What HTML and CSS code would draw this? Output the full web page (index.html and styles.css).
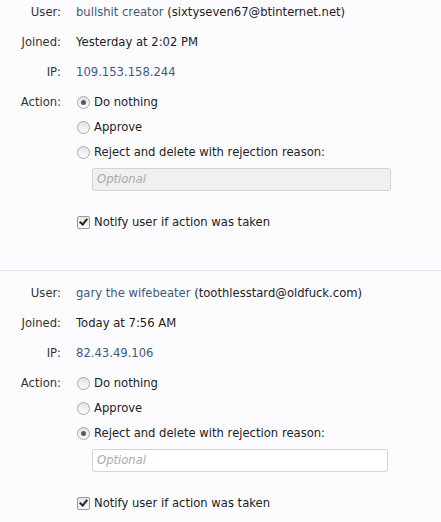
FILE: index.html
```html
<!DOCTYPE html>
<html>
<head>
<meta charset="utf-8">
<link rel="stylesheet" href="styles.css">
</head>
<body>
<div class="list">
  <div class="block first">
    <div class="row"><div class="label">User:</div><div class="value"><a class="link">bullshit creator</a> (sixtyseven67@btinternet.net)</div></div>
    <div class="row"><div class="label">Joined:</div><div class="value">Yesterday at 2:02 PM</div></div>
    <div class="row"><div class="label">IP:</div><div class="value"><a class="link">109.153.158.244</a></div></div>
    <div class="row"><div class="label">Action:</div>
      <div class="value">
        <div class="options">
          <div class="opt"><span class="radio checked"></span>Do nothing</div>
          <div class="opt"><span class="radio"></span>Approve</div>
          <div class="opt"><span class="radio"></span>Reject and delete with rejection reason:</div>
          <div class="input disabled wide">Optional</div>
          <div class="opt notify"><span class="check"></span>Notify user if action was taken</div>
        </div>
      </div>
    </div>
  </div>
  <div class="block last">
    <div class="row"><div class="label">User:</div><div class="value"><a class="link">gary the wifebeater</a> (toothlesstard@oldfuck.com)</div></div>
    <div class="row"><div class="label">Joined:</div><div class="value">Today at 7:56 AM</div></div>
    <div class="row"><div class="label">IP:</div><div class="value"><a class="link">82.43.49.106</a></div></div>
    <div class="row"><div class="label">Action:</div>
      <div class="value">
        <div class="options">
          <div class="opt"><span class="radio"></span>Do nothing</div>
          <div class="opt"><span class="radio"></span>Approve</div>
          <div class="opt"><span class="radio checked"></span>Reject and delete with rejection reason:</div>
          <div class="input">Optional</div>
          <div class="opt notify"><span class="check"></span>Notify user if action was taken</div>
        </div>
      </div>
    </div>
  </div>
</div>
</body>
</html>
```
FILE: styles.css
```css
html, body {
  margin: 0;
  padding: 0;
  background: #fcfcff;
}
body {
  font-family: "DejaVu Sans", Verdana, sans-serif;
  font-size: 11.6px;
  color: #222;
}
.block {
  padding: 12px 0 38px;
  border-bottom: 1px solid #dce7f5;
}
.block.first {
  padding-top: 2px;
}
.block.last {
  padding-bottom: 8px;
  border-bottom: none;
}
.row {
  display: grid;
  grid-template-columns: 61px 1fr;
  column-gap: 15px;
  line-height: 20px;
  margin-bottom: 10px;
}
.row:last-child {
  margin-bottom: 0;
}
.label {
  text-align: right;
  color: #333;
}
.link {
  color: #3c5a7e;
  text-decoration: none;
}
.options {
  display: flex;
  flex-direction: column;
  gap: 5px;
}
.opt {
  display: flex;
  align-items: center;
  height: 20px;
  white-space: nowrap;
}
.radio {
  width: 11px;
  height: 11px;
  border: 1px solid #a9a9a9;
  border-radius: 50%;
  margin: 0 4px 0 1px;
  background: linear-gradient(#e2e2e2, #fdfdfd);
  box-sizing: content-box;
  position: relative;
  flex: none;
}
.radio.checked::after {
  content: "";
  position: absolute;
  left: 3px;
  top: 3px;
  width: 5px;
  height: 5px;
  border-radius: 50%;
  background: #5a5a5a;
}
.check {
  width: 11px;
  height: 11px;
  border: 1px solid #9a9a9a;
  border-radius: 2px;
  margin: 0 4px 0 1px;
  background: linear-gradient(#e4e4e4, #fafafa);
  position: relative;
  flex: none;
}
.check::after {
  content: "";
  position: absolute;
  left: 3px;
  top: 0px;
  width: 3px;
  height: 6px;
  border: solid #222;
  border-width: 0 2px 2px 0;
  transform: rotate(40deg);
}
.input {
  margin: 1px 0 0 16px;
  width: 284px;
  height: 21px;
  line-height: 21px;
  border: 1px solid #d3d3d3;
  border-radius: 3px;
  background: #fff;
  color: #aaa;
  font-style: italic;
  padding: 0 6px 0 4px;
  box-sizing: content-box;
}
.input.disabled {
  background: #f0f0f0;
}
.input.wide {
  width: 287px;
}
.notify {
  margin-top: 16px;
}
```
